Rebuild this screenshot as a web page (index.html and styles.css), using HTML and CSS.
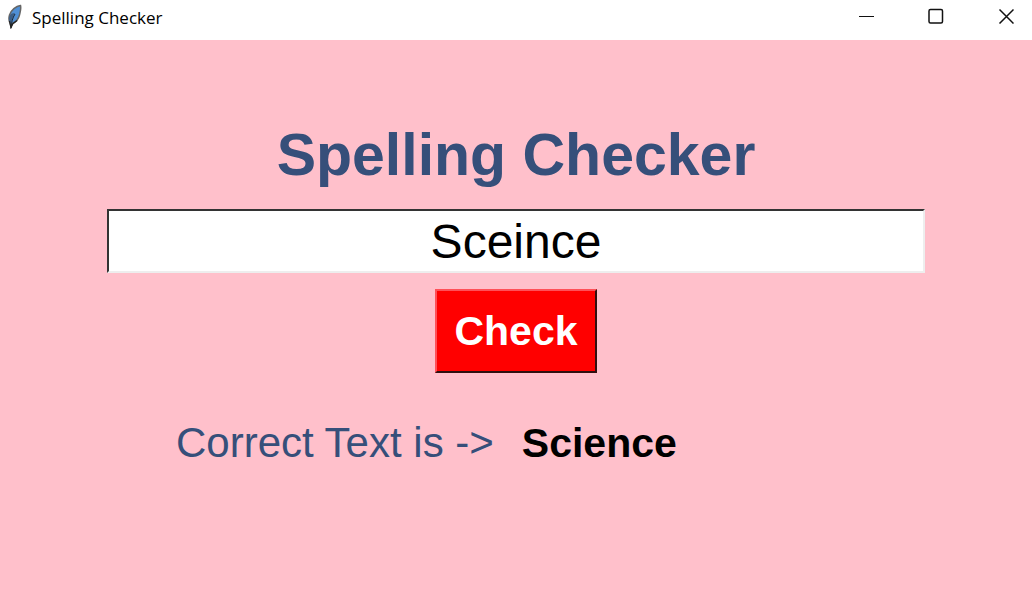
FILE: index.html
```html
<!DOCTYPE html>
<html lang="en">
<head>
<meta charset="utf-8">
<title>Spelling Checker</title>
<link rel="stylesheet" href="styles.css">
</head>
<body>
<header class="titlebar">
  <svg class="feather" viewBox="0 0 18 26" aria-hidden="true">
    <path d="M14.500 2.500C10 3 5 7 3.500 12c-.8 3-.7 6 .5 8l1 4 1.500-3.500C10 19 12.500 16 13.500 12c1-4 1.800-6 1-9.500z" fill="#4f8fd6" stroke="#666" stroke-width="1.500"/>
    <path d="M3.500 13c-.8 3-.4 5 .5 7l1 3c0-5 1.500-9 4-13C6 10 4.500 11 3.500 13z" fill="#3d5f88"/>
    <path d="M9 11C6.500 15 5.500 19 5 25" fill="none" stroke="#1c2733" stroke-width="1"/>
    <path d="M3.500 18l1.500 6.500 2-4 4-3" fill="none" stroke="#222" stroke-width="1.200"/>
  </svg>
  <span class="caption">Spelling Checker</span>
  <div class="controls">
    <button class="control" type="button" aria-label="Minimize"><svg class="glyph" viewBox="0 0 16 16"><path class="line" d="M1 8.500h15"/></svg></button>
    <button class="control" type="button" aria-label="Maximize"><svg class="glyph" viewBox="0 0 16 16"><rect x="1" y="1.500" width="13.500" height="13.500" rx="1.500"/></svg></button>
    <button class="control" type="button" aria-label="Close"><svg class="glyph" viewBox="0 0 16 16"><path d="M1.500 1.500l14 14M15.500 1.500l-14 14"/></svg></button>
  </div>
</header>
<main class="content">
  <h1 class="heading"><label for="word">Spelling Checker</label></h1>
  <input class="entry" id="word" type="text" value="Sceince">
  <button class="check" type="button">Check</button>
  <p class="result"><span class="prompt">Correct Text is -&gt;</span><output class="answer" for="word">Science</output></p>
</main>
</body>
</html>
```
FILE: styles.css
```css
* { box-sizing: border-box; }
body {
  display: flex;
  flex-direction: column;
  min-height: 100vh;
  margin: 0;
  background: #ffc0cb;
  font-family: "Liberation Sans", Arial, sans-serif;
}
.titlebar {
  display: flex;
  align-items: center;
  height: 40px;
  padding: 0 18px 8px 6px;
  background: #fff;
}
.feather { width: 18px; height: 26px; }
.caption { margin-left: 8px; padding-top: 2px; font: 17px "Open Sans", sans-serif; color: #000; }
.controls { display: flex; gap: 54px; margin-left: auto; }
.control { display: flex; padding: 0; border: 0; background: none; }
.glyph { width: 16px; height: 16px; fill: none; stroke: #111; stroke-width: 1.5; }
.line { stroke-width: 1; }
.content {
  display: flex;
  flex-direction: column;
  align-items: center;
  padding: 81px 107px;
}
.heading { margin: 0; font-size: 59px; line-height: 68px; color: #364f7a; }
.entry {
  width: 100%;
  height: 64px;
  margin-top: 20px;
  padding: 0;
  border: 2px solid;
  border-color: #333 #eee #eee #333;
  background: #fff;
  font: 48px "Liberation Sans", Arial, sans-serif;
  color: #000;
  text-align: center;
}
.check {
  width: 162px;
  height: 84px;
  margin-top: 16px;
  padding: 0;
  border: 2px solid;
  border-color: #ff5058 #301010 #301010 #ff5058;
  background: #f00;
  font: bold 41px "Liberation Sans", Arial, sans-serif;
  color: #fff;
}
.result {
  display: flex;
  align-self: flex-start;
  align-items: center;
  gap: 28px;
  margin: 46px 0 0 69px;
  font-size: 42px;
  line-height: 48px;
}
.prompt { color: #364f7a; }
.answer { font-size: 41px; font-weight: bold; color: #000; }
```
